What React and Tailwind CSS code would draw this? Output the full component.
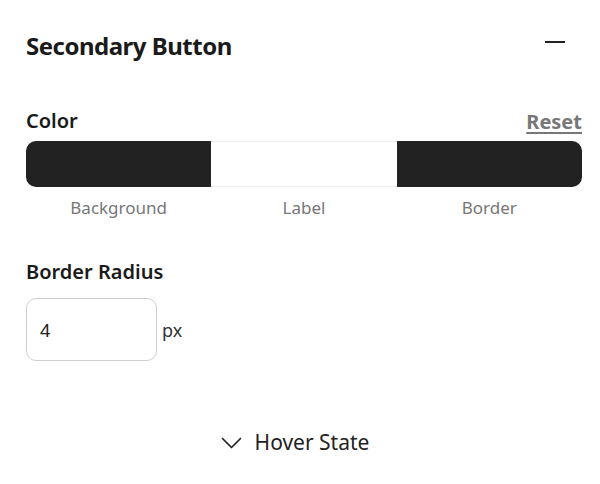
export default function App() {
  const swatches = [
    { label: "Background", color: "bg-[#222222]" },
    { label: "Label", color: "bg-white border-y border-[#ececec]" },
    { label: "Border", color: "bg-[#222222]" },
  ]

  return (
    <div className="min-h-screen bg-white text-[#1a1a1a]" style={{ fontFamily: "'Noto Sans', sans-serif" }}>
      <div className="pl-[26px] pr-[18px] pt-[30px]">
        {/* Header */}
        <div className="flex items-center justify-between h-[32px]">
          <h1 className="text-[24px] font-bold leading-[32px] tracking-[-0.5px]">Secondary Button</h1>
          <div className="w-[20px] h-[2px] bg-[#222] mr-[17px] -mt-[8px]" />
        </div>

        {/* Color */}
        <div className="mt-[46px] flex items-end justify-between">
          <h2 className="text-[20px] font-semibold leading-[26px]">Color</h2>
          <button className="text-[20px] font-bold text-[#777] underline underline-offset-[3px] leading-[26px] -mb-[1px]">
            Reset
          </button>
        </div>
        <div className="mt-[7px] flex h-[46px] rounded-[10px] overflow-hidden">
          {swatches.map((s) => (
            <div key={s.label} className={`flex-1 ${s.color}`} />
          ))}
        </div>
        <div className="flex mt-[9px]">
          {swatches.map((s) => (
            <div key={s.label} className="flex-1 text-center text-[17px] text-[#777] leading-[24px]">
              {s.label}
            </div>
          ))}
        </div>

        {/* Border radius */}
        <h2 className="mt-[39px] text-[20px] font-semibold leading-[26px]">Border Radius</h2>
        <div className="mt-[13px] flex items-start">
          <input
            defaultValue="4"
            className="w-[131px] h-[63px] rounded-[10px] border border-[#cfcfcf] px-[13px] text-[18px] text-[#222] outline-none"
          />
          <span className="ml-[5px] mt-[20px] text-[18px] text-[#333] leading-[24px]">px</span>
        </div>

        {/* Hover state */}
        <div className="mt-[66px] flex items-center justify-center gap-[13px] -ml-[18px]">
          <svg width="21" height="12" viewBox="0 0 21 12" fill="none" stroke="#222" strokeWidth="1.7" strokeLinecap="round" strokeLinejoin="round">
            <polyline points="1.5,1.5 10.5,10.5 19.5,1.5" />
          </svg>
          <span className="text-[21px] text-[#222]">Hover State</span>
        </div>
      </div>
    </div>
  )
}
